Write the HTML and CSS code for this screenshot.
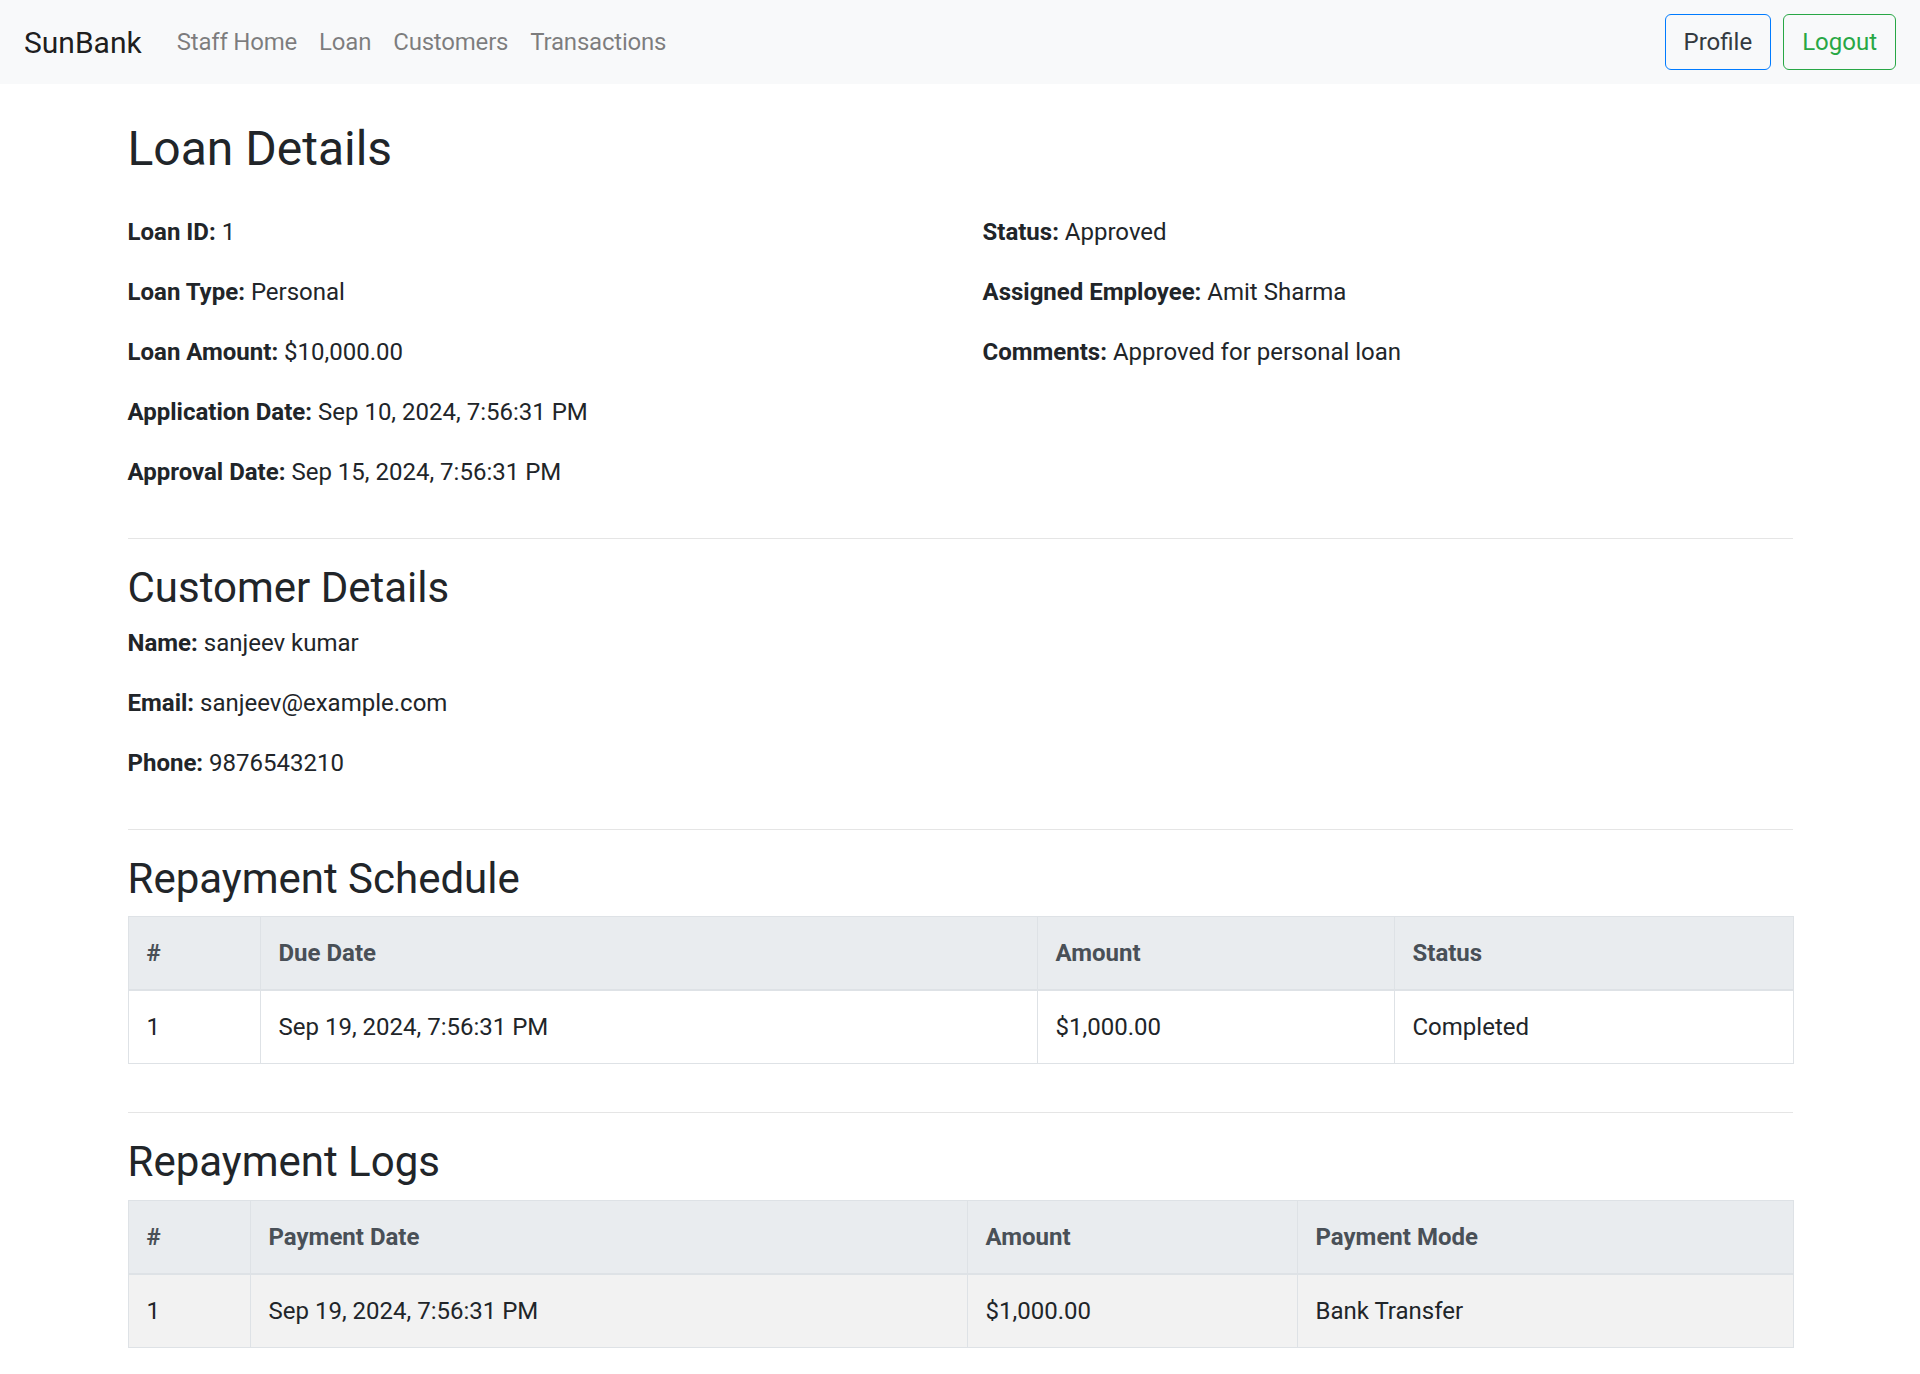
FILE: index.html
```html
<!DOCTYPE html>
<html lang="en">
<head>
<meta charset="utf-8">
<title>Loan Details - SunBank</title>
<link rel="stylesheet" href="styles.css">
</head>
<body>
<nav class="navbar">
  <a class="brand" href="#">SunBank</a>
  <ul class="nav-links">
    <li><a href="#">Staff Home</a></li>
    <li><a href="#">Loan</a></li>
    <li><a href="#">Customers</a></li>
    <li><a href="#">Transactions</a></li>
  </ul>
  <div class="nav-actions">
    <a class="btn btn-profile" href="#">Profile</a>
    <a class="btn btn-logout" href="#">Logout</a>
  </div>
</nav>

<main class="container">
  <section class="section">
    <h2 class="page-title">Loan Details</h2>
    <div class="row">
      <div class="col">
        <p><strong>Loan ID:</strong> 1</p>
        <p><strong>Loan Type:</strong> Personal</p>
        <p><strong>Loan Amount:</strong> $10,000.00</p>
        <p><strong>Application Date:</strong> Sep 10, 2024, 7:56:31 PM</p>
        <p><strong>Approval Date:</strong> Sep 15, 2024, 7:56:31 PM</p>
      </div>
      <div class="col">
        <p><strong>Status:</strong> Approved</p>
        <p><strong>Assigned Employee:</strong> Amit Sharma</p>
        <p><strong>Comments:</strong> Approved for personal loan</p>
      </div>
    </div>
  </section>

  <hr>

  <section class="section">
    <h3>Customer Details</h3>
    <p><strong>Name:</strong> sanjeev kumar</p>
    <p><strong>Email:</strong> sanjeev@example.com</p>
    <p><strong>Phone:</strong> 9876543210</p>
  </section>

  <hr>

  <section class="section">
    <h3>Repayment Schedule</h3>
    <table class="table">
      <colgroup>
        <col class="w-s1"><col class="w-s2"><col class="w-s3"><col class="w-s4">
      </colgroup>
      <thead>
        <tr><th>#</th><th>Due Date</th><th>Amount</th><th>Status</th></tr>
      </thead>
      <tbody>
        <tr><td>1</td><td>Sep 19, 2024, 7:56:31 PM</td><td>$1,000.00</td><td>Completed</td></tr>
      </tbody>
    </table>
  </section>

  <hr>

  <section class="section">
    <h3>Repayment Logs</h3>
    <table class="table table-striped">
      <colgroup>
        <col class="w-l1"><col class="w-l2"><col class="w-l3"><col class="w-l4">
      </colgroup>
      <thead>
        <tr><th>#</th><th>Payment Date</th><th>Amount</th><th>Payment Mode</th></tr>
      </thead>
      <tbody>
        <tr><td>1</td><td>Sep 19, 2024, 7:56:31 PM</td><td>$1,000.00</td><td>Bank Transfer</td></tr>
      </tbody>
    </table>
  </section>
</main>
</body>
</html>
```

FILE: styles.css
```css
* { box-sizing: border-box; }

html, body {
  margin: 0;
  padding: 0;
}

body {
  font-family: Roboto, "Liberation Sans", Arial, sans-serif;
  font-size: 24px;
  line-height: 1.5;
  color: #212529;
  background: #fff;
}

a { text-decoration: none; }

/* Navbar */
.navbar {
  display: flex;
  align-items: center;
  padding: 12px 24px;
  background: #f8f9fa;
}

.brand {
  font-size: 30px;
  line-height: 45px;
  padding: 7.5px 0;
  margin-right: 24px;
  color: rgba(0, 0, 0, 0.9);
}

.nav-links {
  display: flex;
  list-style: none;
  margin: 0;
  padding: 0;
  flex: 1;
}

.nav-links a {
  display: block;
  padding: 12px 11px;
  color: rgba(0, 0, 0, 0.5);
  letter-spacing: -0.2px;
}

.nav-actions {
  display: flex;
  gap: 12px;
}

.btn {
  display: inline-block;
  padding: 9px 18px;
  border: 1px solid transparent;
  border-radius: 6px;
  font-size: 24px;
  line-height: 36px;
}

.btn-profile {
  border-color: #007bff;
  color: #343a40;
}

.btn-logout {
  border-color: #28a745;
  color: #28a745;
}

/* Main */
.container {
  max-width: 1710px;
  margin: 36px auto 0;
  padding: 0 22.5px;
}

.section {
  display: flow-root;
}

.page-title {
  font-size: 48px;
  font-weight: 400;
  line-height: 1.2;
  margin: 0 0 36px;
}

h3 {
  font-size: 42px;
  font-weight: 400;
  line-height: 1.2;
  margin: 0 0 12px;
}

p {
  margin: 0 0 24px;
}

strong { font-weight: 700; }

.row {
  display: grid;
  grid-template-columns: 1fr 1fr;
  column-gap: 45px;
}

hr {
  border: 0;
  border-top: 1px solid rgba(0, 0, 0, 0.1);
  margin: 24px 0;
}

/* Tables */
.table {
  width: 100%;
  table-layout: fixed;
  border-collapse: collapse;
  margin-bottom: 24px;
  color: #212529;
}

.table th,
.table td {
  padding: 18px;
  border: 1px solid #dee2e6;
  text-align: left;
  line-height: 36px;
}

.table thead th {
  background: #e9ecef;
  color: #495057;
  font-weight: 700;
  vertical-align: bottom;
  border-bottom-width: 2px;
}

.table td { vertical-align: top; }

.table-striped tbody tr:nth-of-type(odd) {
  background: rgba(0, 0, 0, 0.05);
}

.w-s1 { width: 132px; }
.w-s2 { width: 777px; }
.w-s3 { width: 357px; }
.w-s4 { width: 399px; }

.w-l1 { width: 122px; }
.w-l2 { width: 717px; }
.w-l3 { width: 330px; }
.w-l4 { width: 496px; }
```
